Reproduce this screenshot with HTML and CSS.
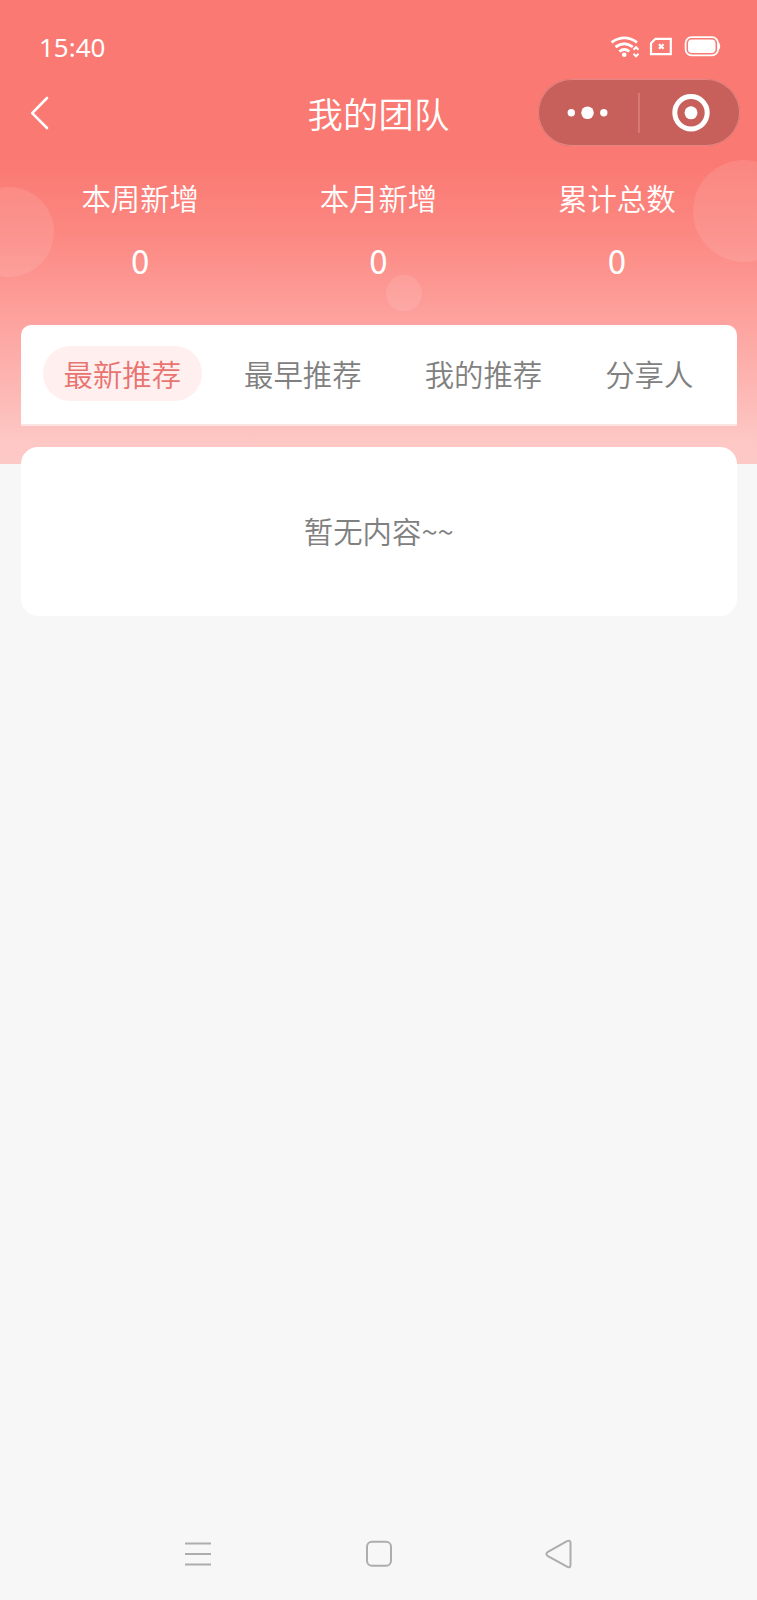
FILE: index.html
```html
<!DOCTYPE html>
<html lang="zh-CN">
<head>
<meta charset="utf-8">
<title>我的团队</title>
<link rel="stylesheet" href="styles.css">
</head>
<body>
<div class="screen">
  <header class="hero">
    <span class="bubble bubble-left"></span>
    <span class="bubble bubble-right"></span>
    <span class="bubble bubble-small"></span>
    <div class="status">
      <span class="time">15:40</span>
      <svg class="status-icons" width="112" height="28" viewBox="0 0 112 28" fill="none" stroke="#fff" stroke-width="2.800">
        <path d="M1.500 8.300Q14.500 -.500 27 8.300M5.500 13Q14.500 6.500 22.800 13M9.300 17.500Q14.300 13.500 19.300 17.500"/>
        <circle cx="14.200" cy="20.800" r="2.300" fill="#fff" stroke="none"/>
        <path d="M23.500 15.800L26 13.200L28.500 15.800M23.500 19.800L26 22.400L28.500 19.800" stroke-width="2"/>
        <path d="M45.500 4.800H60.800V20.200H41V9.300Z" stroke-width="2.200"/>
        <path d="M49 10.200L53.600 14.800M53.600 10.200L49 14.800" stroke-width="2.200"/>
        <rect x="75.600" y="3.200" width="32.400" height="18.200" rx="6" stroke-width="1.800"/>
        <rect x="78" y="5.600" width="27.500" height="13.400" rx="3.800" fill="#fff" stroke="none"/>
        <path d="M108 7.500Q110.200 9 110.200 12.200Q110.200 15.500 108 17Z" fill="#fff" stroke="none"/>
      </svg>
    </div>
    <nav class="navbar">
      <svg class="back" width="20" height="34" viewBox="0 0 20 34" fill="none" stroke="#fff" stroke-width="2.600" stroke-linecap="round" stroke-linejoin="round"><path d="M17 2L2.200 17.200L17 32"/></svg>
      <h1 class="title">我的团队</h1>
      <div class="capsule">
        <svg width="202" height="67" viewBox="0 0 202 67">
          <g fill="#fff"><circle cx="33.300" cy="33.800" r="3.700"/><circle cx="49.500" cy="33.800" r="6.300"/><circle cx="65.800" cy="33.800" r="3.700"/><circle cx="153" cy="33.800" r="6.500"/></g>
          <path d="M101 14V54" stroke="#e08a87" stroke-width="1.200"/>
          <circle cx="153" cy="33.800" r="16.200" fill="none" stroke="#fff" stroke-width="5"/>
        </svg>
      </div>
    </nav>
    <section class="stats">
      <div class="stat"><span class="label">本周新增</span><span class="value">0</span></div>
      <div class="stat"><span class="label">本月新增</span><span class="value">0</span></div>
      <div class="stat"><span class="label">累计总数</span><span class="value">0</span></div>
    </section>
  </header>
  <main class="content">
    <div class="tabs">
      <span class="tab active">最新推荐</span>
      <span class="tab">最早推荐</span>
      <span class="tab">我的推荐</span>
      <span class="tab">分享人</span>
    </div>
    <div class="empty">暂无内容~~</div>
  </main>
  <footer class="system-nav">
    <svg width="28" height="30" viewBox="0 0 28 30" fill="none" stroke="#adadad" stroke-width="2"><path d="M1 4.500H27M1 15H27M1 25.500H27"/></svg>
    <svg width="28" height="30" viewBox="0 0 28 30" fill="none" stroke="#adadad" stroke-width="2"><rect x="2" y="2.800" width="24" height="24" rx="5"/></svg>
    <svg width="28" height="30" viewBox="0 0 28 30" fill="none" stroke="#adadad" stroke-width="2" stroke-linejoin="round"><path d="M22 2.200Q25.500 .500 25.500 4V25.500Q25.500 29.500 22 27.600L2.500 16.800Q.200 15 2.500 13.200Z"/></svg>
  </footer>
</div>
</body>
</html>
```
FILE: styles.css
```css
* { box-sizing: border-box; }
body {
  margin: 0;
  background: #f7f7f7;
  font-family: "Noto Sans CJK SC", sans-serif;
}
.screen {
  display: flex;
  flex-direction: column;
  height: 1600px;
}
.hero {
  position: relative;
  height: 464px;
  flex: none;
  overflow: hidden;
  color: #fff;
  background: linear-gradient(#fa7972 0, #fa7972 160px, #fc8882 235px, #fda29e 320px, #fdc7c4 440px, #fdc9c6 464px);
}
.bubble {
  position: absolute;
  border-radius: 50%;
  background: rgba(255, 255, 255, .1);
}
.bubble-left { width: 90px; height: 90px; left: -36px; top: 187px; }
.bubble-right { width: 102px; height: 102px; left: 693px; top: 160px; }
.bubble-small { width: 36px; height: 36px; left: 386px; top: 275px; }
.status {
  display: flex;
  justify-content: space-between;
  align-items: center;
  height: 79px;
  padding: 16px 35px 0 39px;
}
.time {
  padding-bottom: 2px;
  font: 26px/30px "Noto Sans", sans-serif;
}
.navbar {
  display: grid;
  grid-template-columns: 219px 1fr 219px;
  align-items: center;
  height: 67px;
}
.back { margin-left: 30px; }
.title {
  margin: 0;
  padding-top: 1px;
  text-align: center;
  font-size: 35.300px;
  font-weight: 350;
  line-height: 50px;
  letter-spacing: .2px;
}
.capsule {
  width: 202px;
  height: 67px;
  border-radius: 34px;
  background: #c75f5b;
  box-shadow: inset 0 0 0 1px #e48683;
}
.capsule svg { display: block; }
.stats {
  display: grid;
  grid-template-columns: repeat(3, 1fr);
  padding: 29px 21px 0;
}
.stat {
  display: flex;
  flex-direction: column;
  align-items: center;
  gap: 19px;
}
.label { font-size: 29.400px; font-weight: 350; line-height: 44px; }
.value { font: 33px/44px "Noto Sans CJK SC", sans-serif; }
.content {
  position: relative;
  display: flex;
  flex-direction: column;
  gap: 21px;
  margin: -139px 20.500px 0 21px;
  font-size: 29.400px;
  font-weight: 350;
  color: #808080;
}
.tabs {
  display: flex;
  gap: 21px;
  height: 101px;
  padding: 21px 21px 0 21.500px;
  border-radius: 10px 10px 0 0;
  border-bottom: 2px solid #fde3e2;
  background: #fff;
  background-clip: padding-box;
}
.tab {
  height: 55px;
  padding: 0 21px;
  border-radius: 28px;
  line-height: 54px;
  white-space: nowrap;
}
.active {
  color: #e8736f;
  background: #ffefef;
}
.empty {
  display: flex;
  align-items: center;
  justify-content: center;
  height: 169px;
  padding-bottom: 4px;
  border-radius: 17px;
  background: #fff;
}
.system-nav {
  display: flex;
  justify-content: space-between;
  margin-top: auto;
  padding: 0 184px 31px;
}
```
